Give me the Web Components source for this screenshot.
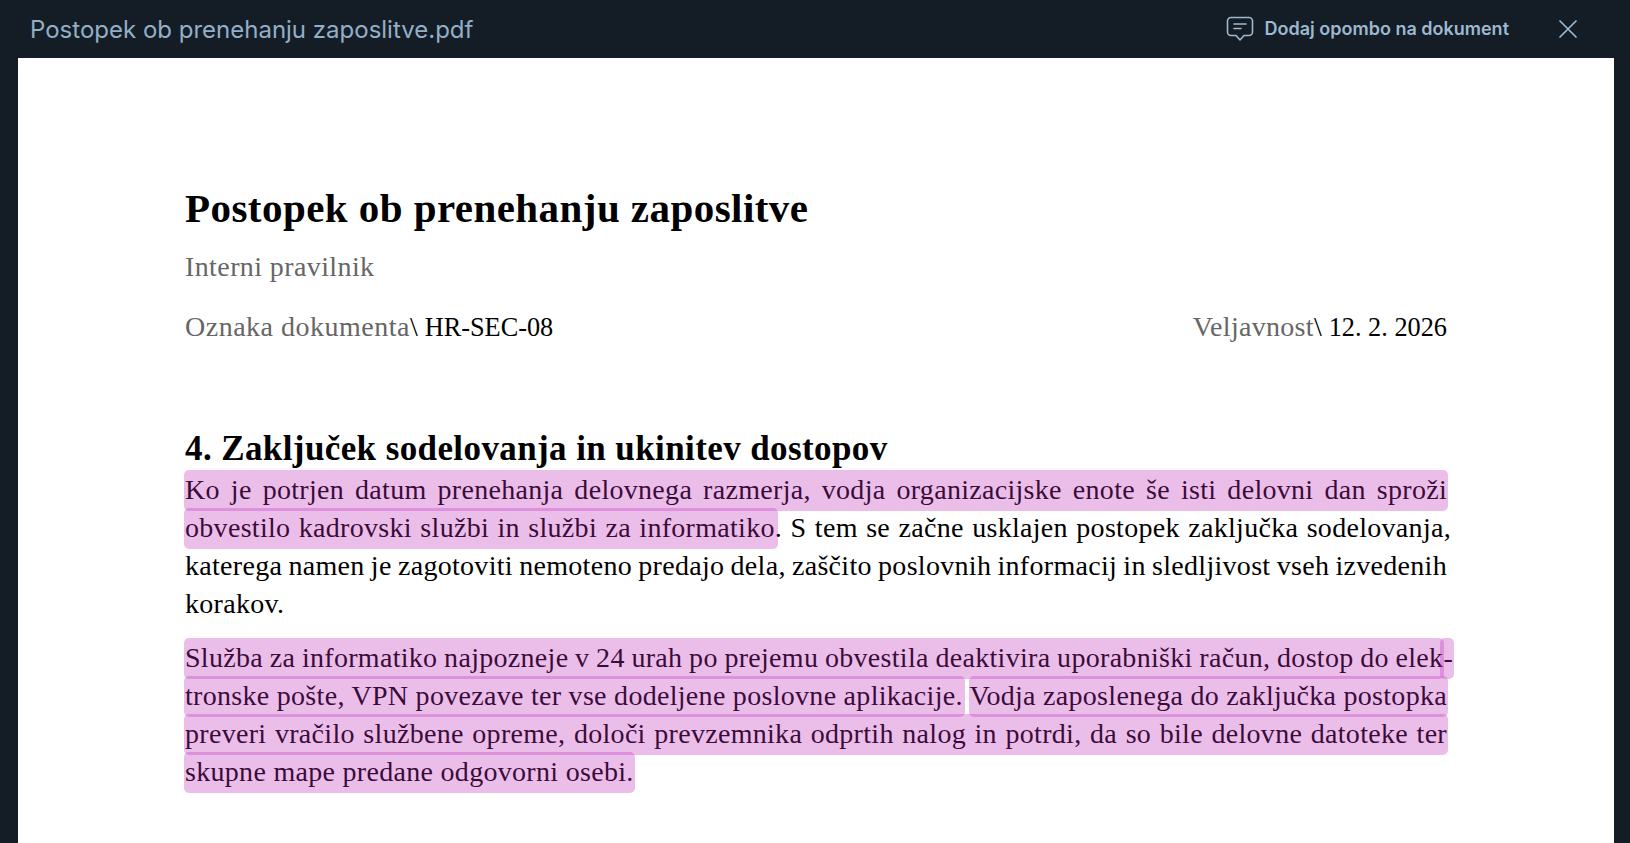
<!DOCTYPE html>
<html lang="sl">
<head>
<meta charset="utf-8">
<title>Postopek ob prenehanju zaposlitve.pdf</title>
<style>
  html, body { margin: 0; height: 100%; background: #141d25; overflow: hidden; }
</style>
</head>
<body>
<viewer-app></viewer-app>

<script>
class ViewerHeader extends HTMLElement {
  constructor() {
    super();
    this.attachShadow({ mode: 'open' });
    this.shadowRoot.innerHTML = `
      <style>
        :host {
          display: flex;
          align-items: center;
          height: 58px;
          padding: 0 53px 0 30px;
          font-family: Inter, "Liberation Sans", sans-serif;
          color: #93afc8;
        }
        .name { font-size: 24px; flex: 1; }
        .note {
          display: flex;
          align-items: center;
          gap: 11px;
          margin-right: 50px;
          font-size: 18px;
          font-weight: 600;
          line-height: 56px;
          color: #9db8d0;
        }
        svg { display: block; }
      </style>
      <div class="name"><slot></slot></div>
      <div class="note">
        <svg width="28" height="26" viewBox="0 0 28 26" fill="none" stroke="#9db8d0" stroke-width="1.6" stroke-linecap="round" stroke-linejoin="round">
          <path d="M5 1.5h18a3.5 3.5 0 0 1 3.5 3.5v11a3.5 3.5 0 0 1-3.5 3.5h-5l-4 4.5-4-4.5H5A3.5 3.5 0 0 1 1.5 16V5A3.5 3.5 0 0 1 5 1.5z"/>
          <path d="M8 8h12M8 12.5h7"/>
        </svg>
        <span>Dodaj opombo na dokument</span>
      </div>
      <svg width="18" height="18" viewBox="0 0 18 18" fill="none" stroke="#9db8d0" stroke-width="1.7" stroke-linecap="round">
        <path d="M1 1l16 16M17 1L1 17"/>
      </svg>
    `;
  }
}

class DocHl extends HTMLElement {
  constructor() {
    super();
    this.attachShadow({ mode: 'open' });
    // no whitespace around the slot, it would be justified with the line
    this.shadowRoot.innerHTML = `<style>
        :host { display: inline; position: relative; }
        i {
          position: absolute;
          left: var(--hl-left, -1px); right: var(--hl-right, -1px);
          top: -4px; bottom: -6px;
          border-radius: 5px;
          background: rgba(190, 40, 185, 0.3);
          pointer-events: none;
        }
      </style><slot></slot><i></i>`;
  }
}

class DocLine extends HTMLElement {
  constructor() {
    super();
    this.attachShadow({ mode: 'open' });
    this.shadowRoot.innerHTML = `<style>
        :host {
          display: block;
          height: 38px;
          line-height: 38px;
          word-spacing: -3.5px;
          text-align: justify;
          text-align-last: justify;
        }
        :host([last]) { text-align-last: left; word-spacing: 0; }
      </style><slot></slot>`;
  }
}

class DocPage extends HTMLElement {
  constructor() {
    super();
    this.attachShadow({ mode: 'open' });
    this.shadowRoot.innerHTML = `
      <style>
        :host {
          display: block;
          flex: 1;
          margin: 0 16px 0 18px;
          padding: 125px 167px 0 167px;
          background: #fff;
          color: #000;
          font-family: "Liberation Serif", serif;
          font-size: 28px;
          letter-spacing: 0.3px;
          overflow: hidden;
        }
      </style>
      <slot></slot>
    `;
  }
}

class DocMeta extends HTMLElement {
  constructor() {
    super();
    this.attachShadow({ mode: 'open' });
    this.shadowRoot.innerHTML = `
      <style>
        :host {
          display: flex;
          justify-content: space-between;
          margin-top: 22px;
          height: 38px;
          line-height: 38px;
          letter-spacing: 0;
        }
      </style>
      <slot></slot>
    `;
  }
}

class ViewerApp extends HTMLElement {
  constructor() {
    super();
    this.attachShadow({ mode: 'open' });
    this.shadowRoot.innerHTML = `
      <style>
        :host { display: flex; flex-direction: column; height: 843px; }
        h1 { margin: 0; font-size: 41px; line-height: 50px; font-weight: 700; letter-spacing: 0.45px; }
        .sub { margin-top: 15px; height: 38px; line-height: 38px; color: #666; letter-spacing: 0.4px; }
        .grey { color: #666; letter-spacing: 0.5px; }
        .grey.short { letter-spacing: 0.3px; }
        .val { font-size: 26.3px; }
        h2 { margin: 80px 0 0; font-size: 35px; line-height: 45px; font-weight: 700; letter-spacing: 0.4px; }
        .p2 { margin-top: 16px; }
        .hang { margin-right: -4px; }
        .hyphen { margin-right: -6px; }
        .past-dot { --hl-right: -3px; }
        .near { --hl-right: -2px; }
        .dash { --hl-left: -3px; }
      </style>
      <viewer-header>Postopek ob prenehanju zaposlitve.pdf</viewer-header>
      <doc-page>
        <h1>Postopek ob prenehanju zaposlitve</h1>
        <div class="sub">Interni pravilnik</div>
        <doc-meta>
          <div><span class="grey">Oznaka dokumenta</span>\\ <span class="val">HR-SEC-08</span></div>
          <div><span class="grey short">Veljavnost</span>\\ <span class="val">12. 2. 2026</span></div>
        </doc-meta>
        <h2>4. Zaključek sodelovanja in ukinitev dostopov</h2>
        <div>
          <doc-line><doc-hl>Ko je potrjen datum prenehanja delovnega razmerja, vodja organizacijske enote še isti delovni dan sproži</doc-hl></doc-line>
          <doc-line class="hang"><doc-hl class="past-dot">obvestilo kadrovski službi in službi za informatiko</doc-hl>. S tem se začne usklajen postopek zaključka sodelovanja,</doc-line>
          <doc-line>katerega namen je zagotoviti nemoteno predajo dela, zaščito poslovnih informacij in sledljivost vseh izvedenih</doc-line>
          <doc-line last>korakov.</doc-line>
        </div>
        <div class="p2">
          <doc-line class="hyphen"><doc-hl>Služba za informatiko najpozneje v 24 urah po prejemu obvestila deaktivira uporabniški račun, dostop do elek</doc-hl><doc-hl class="dash">-</doc-hl></doc-line>
          <doc-line><doc-hl class="near">tronske pošte, VPN povezave ter vse dodeljene poslovne aplikacije.</doc-hl> <doc-hl>Vodja zaposlenega do zaključka postopka</doc-hl></doc-line>
          <doc-line><doc-hl>preveri vračilo službene opreme, določi prevzemnika odprtih nalog in potrdi, da so bile delovne datoteke ter</doc-hl></doc-line>
          <doc-line last><doc-hl>skupne mape predane odgovorni osebi.</doc-hl></doc-line>
        </div>
      </doc-page>
    `;
  }
}

customElements.define('viewer-header', ViewerHeader);
customElements.define('doc-hl', DocHl);
customElements.define('doc-line', DocLine);
customElements.define('doc-page', DocPage);
customElements.define('doc-meta', DocMeta);
customElements.define('viewer-app', ViewerApp);
</script>
</body>
</html>
